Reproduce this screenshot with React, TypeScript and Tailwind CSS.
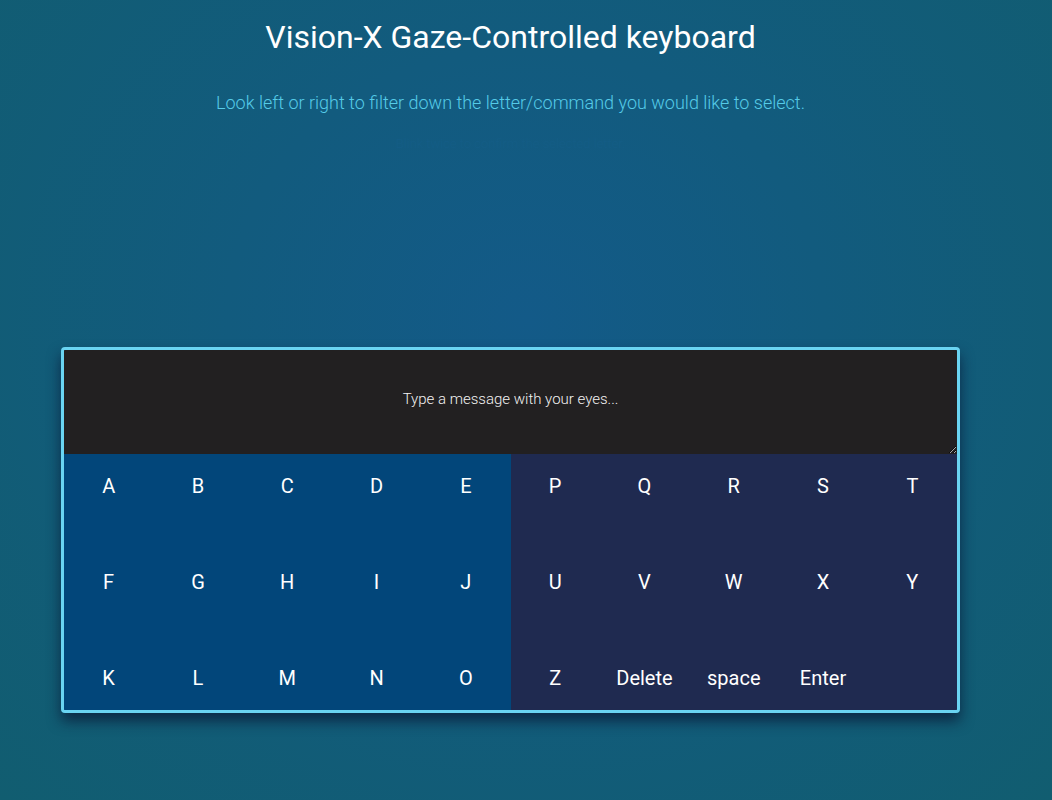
import React from 'react';

const leftKeys = ['A', 'B', 'C', 'D', 'E', 'F', 'G', 'H', 'I', 'J', 'K', 'L', 'M', 'N', 'O'];
const rightKeys = ['P', 'Q', 'R', 'S', 'T', 'U', 'V', 'W', 'X', 'Y', 'Z', 'Delete', 'space', 'Enter', ''];

const KeyHalf: React.FC<{ keys: string[]; className: string }> = ({ keys, className }) => (
  <div className={`grid flex-1 grid-cols-5 gap-y-8 ${className}`}>
    {keys.map((k, i) => (
      <div key={i} className="flex h-16 items-center justify-center text-[20px] text-white">
        {k}
      </div>
    ))}
  </div>
);

const App: React.FC = () => {
  return (
    <div
      className="min-h-screen w-full bg-[radial-gradient(ellipse_at_50%_40%,#135a88_0%,#125b7e_40%,#115d70_100%)] font-['Roboto',sans-serif]"
    >
      <div className="flex w-[1021px] flex-col items-center">
        {/* Header */}
        <h1 className="mt-[16px] text-[32px] leading-[42px] text-white">
          Vision-X Gaze-Controlled keyboard
        </h1>
        <p className="mt-[33px] text-[18px] font-light leading-6 text-[#55cbe8]">
          Look left or right to filter down the letter/command you would like to select.
        </p>
        <p className="mt-[19px] text-[13px] font-light leading-5 text-[#145d86]">
          Blink twice to confirm the selected letter.
        </p>

        {/* Keyboard */}
        <div className="mt-[193px] w-[899px] overflow-hidden rounded-[4px] border-[3px] border-[#6ad4f2] shadow-[0_8px_14px_rgba(10,20,50,0.7)]">
          <textarea
            className="block h-[104px] w-full resize-y bg-[#222021] px-4 pt-[38px] text-center text-[15px] font-light text-white outline-none placeholder:text-[#f2f2f2]"
            placeholder="Type a message with your eyes..."
          />
          <div className="flex">
            <KeyHalf keys={leftKeys} className="bg-[#02467a]" />
            <KeyHalf keys={rightKeys} className="bg-[#1f2a50]" />
          </div>
        </div>
      </div>
    </div>
  );
};

export default App;
